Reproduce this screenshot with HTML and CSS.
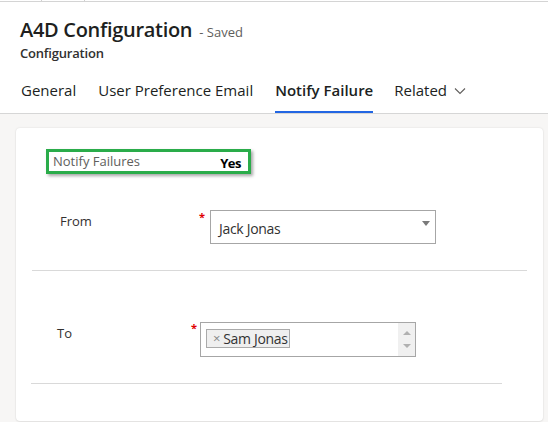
FILE: index.html
```html
<!DOCTYPE html>
<html>
<head>
<meta charset="utf-8">
<link rel="stylesheet" href="styles.css">
</head>
<body>
<div class="page">
  <div class="topstrip"><span class="tick t1"></span><span class="tick t2"></span></div>
  <header class="header">
    <div class="titlerow">
      <h1 class="title">A4D Configuration</h1>
      <span class="saved">- Saved</span>
    </div>
    <div class="entity">Configuration</div>
    <nav class="tabs">
      <span class="tab">General</span>
      <span class="tab">User Preference Email</span>
      <span class="tab active">Notify Failure</span>
      <span class="tab related">Related
        <svg class="chev" width="12" height="8" viewBox="0 0 12 8"><path d="M1 1.5 L6 6.5 L11 1.5" fill="none" stroke="#605e5c" stroke-width="1.1"/></svg>
      </span>
    </nav>
  </header>
  <main class="main">
    <section class="card">
      <div class="notify">
        <span class="notify-label">Notify Failures</span>
        <span class="notify-value">Yes</span>
      </div>
      <div class="field from">
        <span class="label">From</span>
        <span class="req">*</span>
        <div class="select">
          <span class="select-text">Jack Jonas</span>
          <span class="caret"></span>
        </div>
      </div>
      <div class="sep sep1"></div>
      <div class="field to">
        <span class="label">To</span>
        <span class="req">*</span>
        <div class="multi">
          <div class="tags">
            <span class="tag"><span class="tag-x">×</span>Sam Jonas</span>
          </div>
          <div class="spin">
            <span class="arr up"></span>
            <span class="arr down"></span>
          </div>
        </div>
      </div>
      <div class="sep sep2"></div>
    </section>
  </main>
</div>
</body>
</html>
```
FILE: styles.css
```css
* { box-sizing: border-box; }
html, body { margin: 0; padding: 0; }
body {
  width: 548px;
  height: 422px;
  overflow: hidden;
  font-family: "Open Sans", "Noto Sans", sans-serif;
  color: #323130;
  background: #f7f6f5;
}
.page { width: 548px; height: 422px; display: flex; flex-direction: column; }
.topstrip {
  display: flex;
  height: 2px;
  border-bottom: 1px solid #d4d4d4;
  background: #fff;
}
.tick { height: 1px; border-right: 1px solid #d0d0d0; }
.t1 { width: 42px; }
.t2 { width: 43px; }
.header {
  background: #fff;
  padding-left: 20px;
  border-bottom: 1px solid #d6d6d6;
  display: flex;
  flex-direction: column;
}
.titlerow {
  display: flex;
  align-items: baseline;
  margin-top: 14px;
  height: 28px;
}
.title {
  margin: 0;
  font-size: 20px;
  font-weight: 600;
  line-height: 28px;
  color: #201f1e;
  letter-spacing: -0.3px;
}
.saved {
  margin-left: 7px;
  font-size: 13px;
  color: #605e5c;
}
.entity {
  font-size: 13px;
  line-height: 18px;
  font-weight: 600;
  color: #323130;
  letter-spacing: -0.2px;
}
.tabs {
  display: flex;
  padding-top: 18px;
}
.tab {
  font-size: 15px;
  line-height: 20px;
  padding-bottom: 11px;
  border-bottom: 2px solid transparent;
  margin-right: 22px;
  color: #201f1e;
  display: flex;
  align-items: center;
}
.tab:first-child { margin-left: 1px; }
.tab.active {
  font-weight: 600;
  border-bottom-color: #2266e3;
  margin-right: 21px;
}
.chev { margin-left: 7px; margin-top: 1px; }
.main {
  flex: 1;
  padding: 14px 5px 0 16px;
}
.card {
  width: 527px;
  height: 293px;
  background: #fff;
  border-radius: 4px;
  box-shadow: 0 0 2px rgba(0,0,0,0.12), 0 1px 2px rgba(0,0,0,0.06);
  padding-top: 21px;
  display: flex;
  flex-direction: column;
}
.notify {
  margin-left: 30px;
  width: 205px;
  height: 25px;
  border: 3px solid #2aac4a;
  box-shadow: 2px 2px 3px rgba(0,0,0,0.35);
  display: flex;
  align-items: center;
  justify-content: space-between;
  padding: 0 7px 0 4px;
}
.notify-label {
  font-size: 13px;
  color: #605e5c;
  margin-top: -2px;
}
.notify-value {
  font-size: 13px;
  font-weight: 700;
  color: #000;
  letter-spacing: -0.5px;
  margin-top: 2px;
}
.field { display: flex; align-items: flex-start; }
.label {
  font-size: 13px;
  line-height: 18px;
  color: #323130;
}
.req {
  color: #e00000;
  font-size: 11px;
  line-height: 10px;
  font-weight: 700;
}
.from { margin-top: 36px; margin-left: 44px; }
.from .label { width: 139px; margin-top: 2px; }
.from .req { width: 11px; margin-top: 2px; }
.select {
  width: 226px;
  height: 34px;
  border: 1px solid #a6a6a6;
  display: flex;
  align-items: center;
  justify-content: space-between;
  padding: 2px 5px 0 8px;
}
.select-text { font-size: 14px; color: #323130; letter-spacing: -0.3px; }
.caret {
  align-self: flex-start;
  margin-top: 8px;
  width: 0; height: 0;
  border-left: 4px solid transparent;
  border-right: 4px solid transparent;
  border-top: 5px solid #7a7a7a;
}
.sep { height: 1px; background: #d9d9d9; }
.sep1 { margin-top: 26px; margin-left: 16px; width: 495px; }
.to { margin-top: 51px; margin-left: 41px; }
.to .label { width: 134px; margin-top: 2px; }
.to .req { width: 9px; margin-top: 1px; }
.multi {
  width: 216px;
  height: 35px;
  border: 1px solid #a6a6a6;
  display: flex;
}
.tags { flex: 1; padding: 3px 0 0 5px; }
.tag {
  display: inline-flex;
  align-items: center;
  height: 19px;
  width: 84px;
  background: #efefef;
  border: 1px solid #aaaaaa;
  font-size: 14px;
  color: #333;
  padding-left: 6px;
  letter-spacing: -0.3px;
}
.tag-x { color: #888; font-size: 13px; margin-right: 3px; }
.spin {
  width: 17px;
  background: #f0f0f0;
  display: flex;
  flex-direction: column;
  align-items: center;
  justify-content: space-between;
  padding: 8px 0 8px;
}
.arr { width: 0; height: 0; border-left: 4px solid transparent; border-right: 4px solid transparent; }
.up { border-bottom: 4px solid #b0b0b0; }
.down { border-top: 4px solid #b0b0b0; }
.sep2 { margin-top: 26px; margin-left: 15px; width: 471px; }
```
